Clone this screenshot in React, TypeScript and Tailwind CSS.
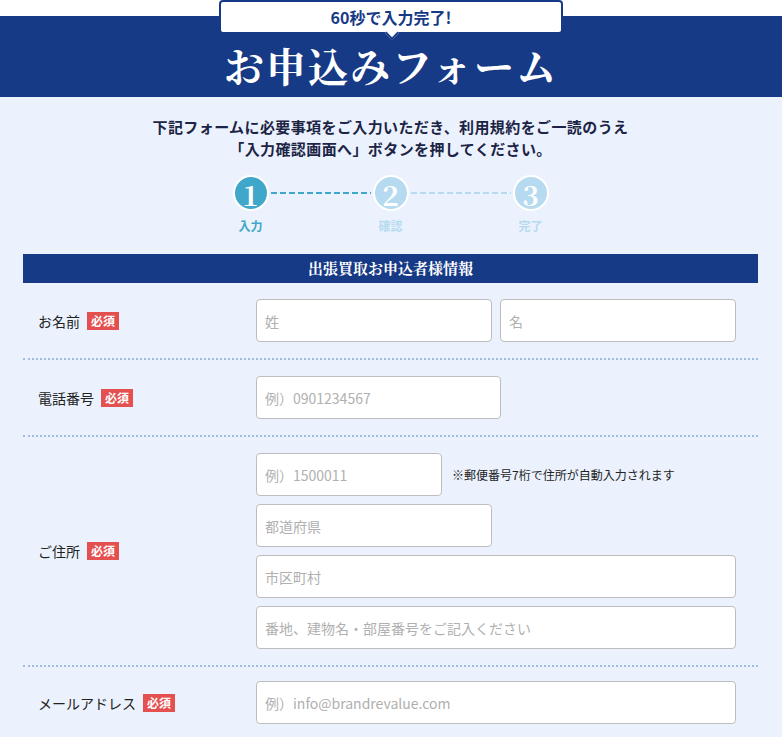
import React from 'react'

const sans = { fontFamily: '"Noto Sans CJK JP", "Noto Sans", sans-serif' }
const serif = { fontFamily: '"Noto Serif CJK JP", "Liberation Serif", "Noto Sans CJK JP", serif' }

function Required() {
  return (
    <span className="ml-[7px] inline-flex items-center h-[18px] px-[4px] bg-[#e4504f] text-white text-[12px] font-bold leading-none">
      必須
    </span>
  )
}

function Field({ placeholder, className = '' }: { placeholder: string; className?: string }) {
  return (
    <input
      placeholder={placeholder}
      className={`h-[43px] rounded-[4px] border border-[#bdbdbd] bg-white px-[8px] text-[14px] text-[#333] placeholder:text-[#b0b0b0] outline-none ${className}`}
      style={sans}
    />
  )
}

function Label({ text }: { text: string }) {
  return (
    <div className="w-[233px] pl-[15px] flex items-center text-[14px] leading-[20px] text-[#222]">
      {text}
      <Required />
    </div>
  )
}

function Row({ label, children }: { label: string; children: React.ReactNode }) {
  return (
    <div className="flex items-center py-4 border-b-2 border-dotted border-[#9fbde3]">
      <Label text={label} />
      <div className="w-[480px]">{children}</div>
    </div>
  )
}

function Step({ n, label, active }: { n: number; label: string; active: boolean }) {
  return (
    <div className="flex flex-col items-center w-[40px]">
      <div
        className={`w-[36px] h-[36px] rounded-full border-2 border-white flex items-center justify-center text-white text-[28px] font-bold leading-none ${active ? 'bg-[#3fa7c9]' : 'bg-[#b6dbf0]'}`}
        style={serif}
      >
        <span className="mt-[2px]">{n}</span>
      </div>
      <div className={`mt-[7px] text-[12px] font-bold leading-[16px] ${active ? 'text-[#3fa7c9]' : 'text-[#b6dbf0]'}`}>{label}</div>
    </div>
  )
}

function Dash({ active }: { active: boolean }) {
  return (
    <div
      className={`mt-[17px] w-[100px] h-[2px] ${active
        ? 'bg-[repeating-linear-gradient(90deg,#3fa7c9_0_6px,transparent_6px_9px)]'
        : 'bg-[repeating-linear-gradient(90deg,#b6dbf0_0_6px,transparent_6px_9px)]'}`}
    />
  )
}

export default function App() {
  return (
    <div className="min-h-[737px] bg-[#ebf2fd] text-[#222]" style={sans}>
      {/* Header */}
      <div className="bg-white pt-[16px]">
        <div className="relative h-[81px] bg-[#173a86] flex justify-center">
          <div className="absolute top-[-16px] left-[219px] w-[344px] h-[34px] rounded-[4px] border-2 border-[#173a86] bg-white flex items-center justify-center">
            <span className="text-[16px] font-bold text-[#173a86]">60秒で入力完了!</span>
            <span className="absolute bottom-[-6px] left-[166px] w-[10px] h-[10px] bg-white rotate-45 border-r-2 border-b-2 border-[#173a86]" />
          </div>
          <h1 className="mt-[27px] text-[40px] font-bold leading-[44px] tracking-[2px] text-white" style={serif}>
            お申込みフォーム
          </h1>
        </div>
      </div>

      <div className="px-[23px] pr-[24px]">
        <p className="pt-[19px] text-center text-[15px] tracking-[0.4px] font-bold leading-[22px] text-[#1c2445]">
          下記フォームに必要事項をご入力いただき、利用規約をご一読のうえ
          <br />
          「入力確認画面へ」ボタンを押してください。
        </p>

        <div className="mt-[15px] flex justify-center">
          <Step n={1} label="入力" active />
          <Dash active />
          <Step n={2} label="確認" active={false} />
          <Dash active={false} />
          <Step n={3} label="完了" active={false} />
        </div>

        <div className="mt-[20px] h-[29px] bg-[#173a86] flex items-center justify-center text-white text-[15px] font-bold" style={serif}>
          出張買取お申込者様情報
        </div>

        <Row label="お名前">
          <div className="flex gap-2">
            <Field placeholder="姓" className="w-[236px]" />
            <Field placeholder="名" className="w-[236px]" />
          </div>
        </Row>

        <Row label="電話番号">
          <Field placeholder="例）0901234567" className="w-[245px]" />
        </Row>

        <Row label="ご住所">
          <div className="flex flex-col gap-2">
            <div className="flex items-center">
              <Field placeholder="例）1500011" className="w-[186px]" />
              <span className="ml-[10px] text-[12px] text-[#222]">※郵便番号7桁で住所が自動入力されます</span>
            </div>
            <Field placeholder="都道府県" className="w-[236px]" />
            <Field placeholder="市区町村" className="w-[480px]" />
            <Field placeholder="番地、建物名・部屋番号をご記入ください" className="w-[480px]" />
          </div>
        </Row>

        <div className="flex items-center pt-[14px] pb-4">
          <Label text="メールアドレス" />
          <Field placeholder="例）info@brandrevalue.com" className="w-[480px]" />
        </div>
      </div>
    </div>
  )
}
